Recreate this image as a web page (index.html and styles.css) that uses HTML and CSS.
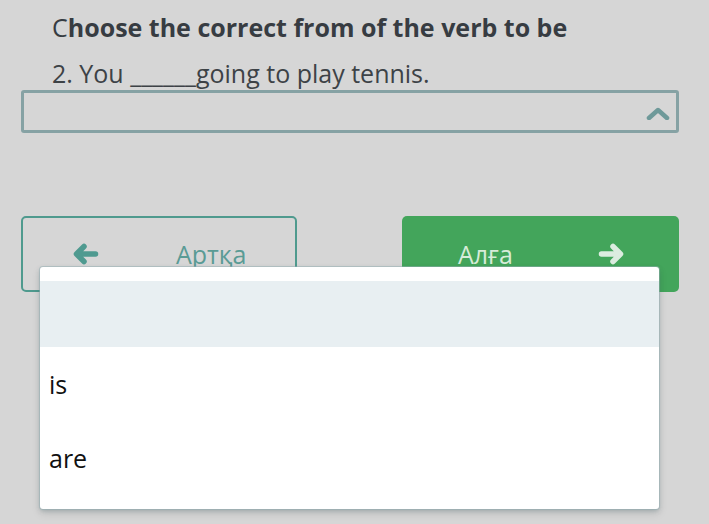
FILE: index.html
```html
<!DOCTYPE html>
<html>
<head>
<meta charset="utf-8">
<link rel="stylesheet" href="styles.css">
</head>
<body>
<div class="page">
  <h1 class="title"><span class="first">C</span>hoose the correct from of the verb to be</h1>
  <p class="question">2. You ______going to play tennis.</p>
  <div class="select-wrap">
    <div class="select">
      <svg class="chev" width="24" height="14" viewBox="0 0 24 14"><path d="M3 12 L12 4 L21 12" fill="none" stroke="#6e9999" stroke-width="4.5" stroke-linecap="round" stroke-linejoin="round"/></svg>
    </div>
    <div class="menu">
      <div class="opt opt-empty"></div>
      <div class="opt">is</div>
      <div class="opt">are</div>
    </div>
  </div>
  <div class="nav">
    <button class="btn btn-back">
      <svg class="arr" width="28" height="22" viewBox="0 0 28 22"><path d="M12 3.5 L4.5 11 L12 18.5 M6 11 H23.5" fill="none" stroke="#4f9a90" stroke-width="5.5" stroke-linecap="round" stroke-linejoin="round"/></svg>
      <span class="lbl">Артқа</span>
    </button>
    <button class="btn btn-next">
      <span class="lbl">Алға</span>
      <svg class="arr" width="28" height="22" viewBox="0 0 28 22"><path d="M16 3.5 L23.5 11 L16 18.5 M22 11 H4.5" fill="none" stroke="#dcece0" stroke-width="5.5" stroke-linecap="round" stroke-linejoin="round"/></svg>
    </button>
  </div>
</div>
</body>
</html>
```
FILE: styles.css
```css
html, body {
  margin: 0;
  padding: 0;
  background: #d6d6d6;
  font-family: "Open Sans", "Noto Sans", sans-serif;
  width: 709px;
  height: 524px;
  overflow: hidden;
}
.page {
  padding: 10px 30px 0 21px;
}
.title {
  margin: 0 0 0 31px;
  font-size: 25px;
  font-weight: 700;
  color: #373c42;
  line-height: 34px;
}
.title .first {
  font-weight: 400;
}
.question {
  margin: 12px 0 0 31px;
  font-size: 25px;
  font-weight: 400;
  color: #3d4246;
  line-height: 34px;
}
.select-wrap {
  position: relative;
}
.select {
  height: 37px;
  border: 3px solid #86a2a4;
  border-radius: 3px;
  display: flex;
  align-items: center;
  justify-content: flex-end;
  padding-right: 6px;
}
.chev {
  margin-top: 2px;
}
.menu {
  position: absolute;
  left: 19px;
  top: 177px;
  width: 619px;
  height: 242px;
  background: #fff;
  border-radius: 3px;
  box-shadow: 0 0 0 1px rgba(150,175,180,0.5), 0 2px 4px rgba(90,120,125,0.35), 0 4px 10px rgba(0,0,0,0.12);
  padding-top: 14px;
  box-sizing: border-box;
  z-index: 5;
}
.opt {
  height: 74px;
  display: flex;
  align-items: center;
  padding-left: 9px;
  font-size: 25px;
  color: #111;
}
.opt-empty {
  height: 66px;
  background: #e8eff2;
}
.nav {
  display: flex;
  justify-content: space-between;
  margin-top: 83px;
}
.btn {
  width: 276px;
  height: 76px;
  border-radius: 5px;
  font-family: "Open Sans", "Noto Sans", sans-serif;
  font-size: 25px;
  display: flex;
  align-items: center;
  padding: 0;
  box-sizing: border-box;
}
.btn-back {
  background: transparent;
  border: 2px solid #4f9a8e;
  color: #5a9b95;
  padding-left: 49px;
}
.btn-back .lbl {
  margin-left: 76px;
}
.btn-next {
  width: 277px;
  background: #43a55b;
  border: none;
  color: #d7ecd9;
  padding-left: 56px;
}
.btn-next .lbl {
  margin-right: 84px;
}
```
